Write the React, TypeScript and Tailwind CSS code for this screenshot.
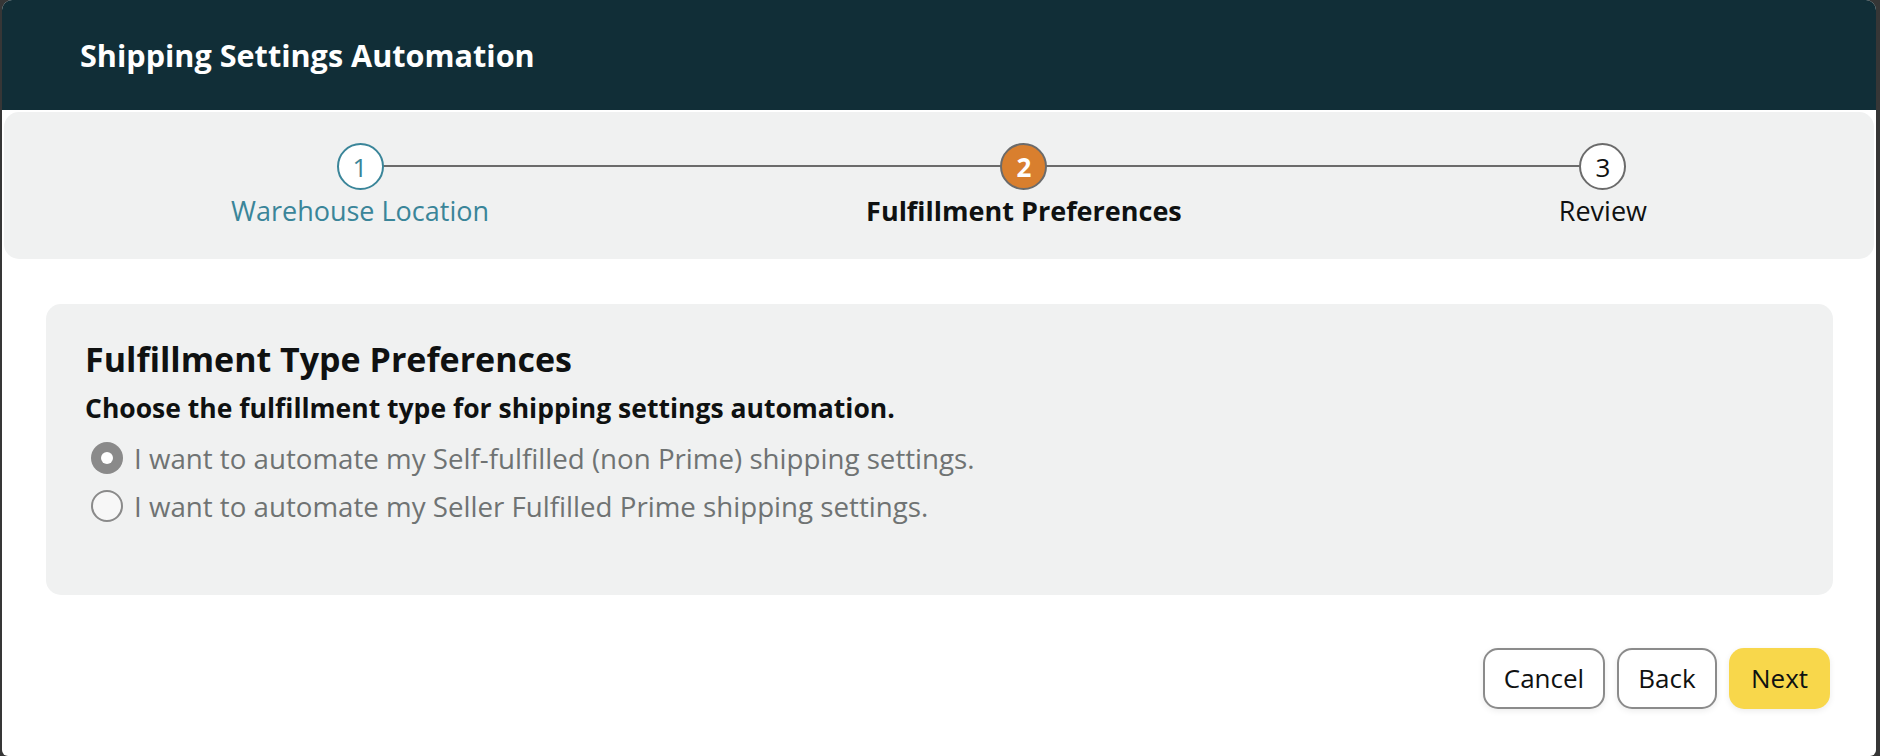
import React from 'react';

const steps = [
  { n: 1, label: 'Warehouse Location', state: 'done' },
  { n: 2, label: 'Fulfillment Preferences', state: 'active' },
  { n: 3, label: 'Review', state: 'todo' },
] as const;

const options = [
  { id: 'sf', label: 'I want to automate my Self-fulfilled (non Prime) shipping settings.', checked: true },
  { id: 'sfp', label: 'I want to automate my Seller Fulfilled Prime shipping settings.', checked: false },
];

function StepCircle({ n, state }: { n: number; state: 'done' | 'active' | 'todo' }) {
  if (state === 'done') {
    return (
      <div className="relative z-10 w-[47px] h-[47px] rounded-full border-2 border-[#3a8599] bg-white text-[#3a8599] flex items-center justify-center text-[26px] leading-none">
        {n}
      </div>
    );
  }
  if (state === 'active') {
    return (
      <div className="relative z-10 w-[47px] h-[47px] rounded-full border-2 border-[#6b6b6b] bg-[#d97f2e] text-white font-bold flex items-center justify-center text-[26px] leading-none">
        {n}
      </div>
    );
  }
  return (
    <div className="relative z-10 w-[47px] h-[47px] rounded-full border-2 border-[#6b6b6b] bg-white text-[#0f1111] flex items-center justify-center text-[26px] leading-none">
      {n}
    </div>
  );
}

export default function App() {
  return (
    <div
      className="min-h-screen bg-[#363636] px-[2px] pr-[4px]"
      style={{ fontFamily: '"Open Sans", "Noto Sans", sans-serif' }}
    >
      <div className="h-[756px] bg-white rounded-t-[10px] rounded-b-[6px] overflow-hidden flex flex-col">
        {/* Header */}
        <div className="h-[110px] shrink-0 bg-[#112e37] flex items-center px-[78px]">
          <h1 className="text-white text-[30.6px] font-bold leading-none">Shipping Settings Automation</h1>
        </div>

        {/* Stepper */}
        <div className="mt-[2px] mx-[2px] h-[147px] shrink-0 bg-[#f0f1f1] rounded-[15px] relative">
          <div className="absolute top-[53px] left-[355px] right-[272px] h-[2px] bg-[#6b6b6b]" />
          <div className="flex justify-between px-[227px] pt-[31px]">
            {steps.map((s) => (
              <div key={s.n} className="flex flex-col items-center">
                <StepCircle n={s.n} state={s.state} />
                <span
                  className={`mt-[3px] text-[27px] leading-[36px] ${
                    s.state === 'done'
                      ? 'text-[#3a8599]'
                      : s.state === 'active'
                        ? 'text-[#0f1111] font-bold'
                        : 'text-[#0f1111]'
                  }`}
                >
                  {s.label}
                </span>
              </div>
            ))}
          </div>
        </div>

        {/* Content card */}
        <div className="mt-[45px] ml-[44px] mr-[43px] h-[291px] bg-[#f0f1f1] rounded-[15px] pl-[39px] pt-[35px]">
          <h2 className="text-[34px] leading-[40px] font-bold text-[#0f1111]">Fulfillment Type Preferences</h2>
          <p className="mt-[13px] text-[26.5px] leading-[32px] font-bold text-[#0f1111]">
            Choose the fulfillment type for shipping settings automation.
          </p>
          <div className="mt-[11px] flex flex-col">
            {options.map((o) => (
              <label key={o.id} className="h-[48px] flex items-center gap-[11px] text-[27.7px] text-[#6f7373]">
                {o.checked ? (
                  <span className="ml-[6px] -mt-[3px] w-[32px] h-[32px] shrink-0 rounded-full bg-[#8a8a8a] flex items-center justify-center">
                    <span className="w-[12px] h-[12px] rounded-full bg-white" />
                  </span>
                ) : (
                  <span className="ml-[6px] -mt-[3px] w-[32px] h-[32px] shrink-0 rounded-full border-2 border-[#8a8a8a] bg-[#f7f7f7]" />
                )}
                <span>{o.label}</span>
              </label>
            ))}
          </div>
        </div>

        {/* Actions */}
        <div className="mt-[53px] mr-[46px] flex justify-end gap-[12px]">
          <button className="h-[61px] w-[122px] rounded-[15px] border-2 border-[#8b8b8b] bg-white text-[26px] text-[#0f1111] shadow-[0_2px_6px_rgba(0,0,0,0.08)]">
            Cancel
          </button>
          <button className="h-[61px] w-[100px] rounded-[15px] border-2 border-[#8b8b8b] bg-white text-[26px] text-[#0f1111] shadow-[0_2px_6px_rgba(0,0,0,0.08)]">
            Back
          </button>
          <button className="h-[61px] w-[101px] rounded-[15px] bg-[#f8d74b] text-[26px] text-[#0f1111] shadow-[0_2px_6px_rgba(0,0,0,0.08)]">
            Next
          </button>
        </div>
      </div>
    </div>
  );
}
